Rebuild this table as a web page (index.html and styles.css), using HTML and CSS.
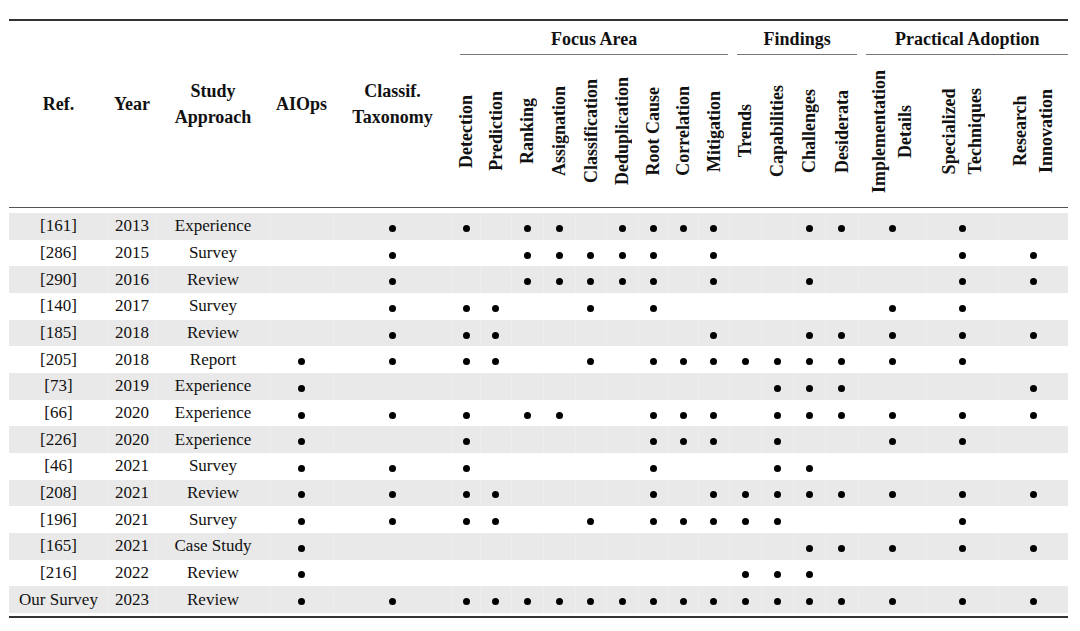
FILE: index.html
```html
<!DOCTYPE html>
<html lang="en">
<head>
<meta charset="utf-8">
<title>Comparison of surveys</title>
<link rel="stylesheet" href="styles.css">
</head>
<body>
<table class="tbl">
<colgroup>
<col class="w-ref"><col class="w-year"><col class="w-study"><col class="w-aiops"><col class="w-classif">
<col class="w-28"><col class="w-31"><col class="w-32"><col class="w-32"><col class="w-31"><col class="w-32"><col class="w-30"><col class="w-30"><col class="w-31">
<col class="w-32"><col class="w-32"><col class="w-32"><col class="w-33">
<col class="w-impl"><col class="w-spec"><col class="w-res">
</colgroup>
<thead>
<tr class="grp">
<th rowspan="2" class="plain">Ref.</th>
<th rowspan="2" class="plain">Year</th>
<th rowspan="2" class="plain">Study<br>Approach</th>
<th rowspan="2" class="plain">AIOps</th>
<th rowspan="2" class="plain">Classif.<br>Taxonomy</th>
<th colspan="9" class="grp-cell"><div class="grp-label">Focus Area</div></th>
<th colspan="4" class="grp-cell"><div class="grp-label">Findings</div></th>
<th colspan="3" class="grp-cell"><div class="grp-label grp-last">Practical Adoption</div></th>
</tr>
<tr class="rot-row">
<th><div class="rotwrap"><span class="rot">Detection</span></div></th>
<th><div class="rotwrap"><span class="rot">Prediction</span></div></th>
<th><div class="rotwrap"><span class="rot">Ranking</span></div></th>
<th><div class="rotwrap"><span class="rot">Assignation</span></div></th>
<th><div class="rotwrap"><span class="rot">Classification</span></div></th>
<th><div class="rotwrap"><span class="rot">Deduplication</span></div></th>
<th><div class="rotwrap"><span class="rot">Root Cause</span></div></th>
<th><div class="rotwrap"><span class="rot">Correlation</span></div></th>
<th><div class="rotwrap"><span class="rot">Mitigation</span></div></th>
<th><div class="rotwrap"><span class="rot">Trends</span></div></th>
<th><div class="rotwrap"><span class="rot">Capabilities</span></div></th>
<th><div class="rotwrap"><span class="rot">Challenges</span></div></th>
<th><div class="rotwrap"><span class="rot">Desiderata</span></div></th>
<th><div class="rotwrap"><span class="rot two">Implementation<br>Details</span></div></th>
<th><div class="rotwrap"><span class="rot two">Specialized<br>Techniques</span></div></th>
<th><div class="rotwrap"><span class="rot two">Research<br>Innovation</span></div></th>
</tr>
</thead>
<tbody>
<tr class="alt"><td>[161]</td><td>2013</td><td>Experience</td><td></td><td><i class="dot"></i></td>
<td><i class="dot"></i></td><td></td><td><i class="dot"></i></td><td><i class="dot"></i></td><td></td><td><i class="dot"></i></td><td><i class="dot"></i></td><td><i class="dot"></i></td><td><i class="dot"></i></td>
<td></td><td></td><td><i class="dot"></i></td><td><i class="dot"></i></td>
<td><i class="dot"></i></td><td><i class="dot"></i></td><td></td></tr>
<tr><td>[286]</td><td>2015</td><td>Survey</td><td></td><td><i class="dot"></i></td>
<td></td><td></td><td><i class="dot"></i></td><td><i class="dot"></i></td><td><i class="dot"></i></td><td><i class="dot"></i></td><td><i class="dot"></i></td><td></td><td><i class="dot"></i></td>
<td></td><td></td><td></td><td></td>
<td></td><td><i class="dot"></i></td><td><i class="dot"></i></td></tr>
<tr class="alt"><td>[290]</td><td>2016</td><td>Review</td><td></td><td><i class="dot"></i></td>
<td></td><td></td><td><i class="dot"></i></td><td><i class="dot"></i></td><td><i class="dot"></i></td><td><i class="dot"></i></td><td><i class="dot"></i></td><td></td><td><i class="dot"></i></td>
<td></td><td></td><td><i class="dot"></i></td><td></td>
<td></td><td><i class="dot"></i></td><td><i class="dot"></i></td></tr>
<tr><td>[140]</td><td>2017</td><td>Survey</td><td></td><td><i class="dot"></i></td>
<td><i class="dot"></i></td><td><i class="dot"></i></td><td></td><td></td><td><i class="dot"></i></td><td></td><td><i class="dot"></i></td><td></td><td></td>
<td></td><td></td><td></td><td></td>
<td><i class="dot"></i></td><td><i class="dot"></i></td><td></td></tr>
<tr class="alt"><td>[185]</td><td>2018</td><td>Review</td><td></td><td><i class="dot"></i></td>
<td><i class="dot"></i></td><td><i class="dot"></i></td><td></td><td></td><td></td><td></td><td></td><td></td><td><i class="dot"></i></td>
<td></td><td></td><td><i class="dot"></i></td><td><i class="dot"></i></td>
<td><i class="dot"></i></td><td><i class="dot"></i></td><td><i class="dot"></i></td></tr>
<tr><td>[205]</td><td>2018</td><td>Report</td><td><i class="dot"></i></td><td><i class="dot"></i></td>
<td><i class="dot"></i></td><td><i class="dot"></i></td><td></td><td></td><td><i class="dot"></i></td><td></td><td><i class="dot"></i></td><td><i class="dot"></i></td><td><i class="dot"></i></td>
<td><i class="dot"></i></td><td><i class="dot"></i></td><td><i class="dot"></i></td><td><i class="dot"></i></td>
<td><i class="dot"></i></td><td><i class="dot"></i></td><td></td></tr>
<tr class="alt"><td>[73]</td><td>2019</td><td>Experience</td><td><i class="dot"></i></td><td></td>
<td></td><td></td><td></td><td></td><td></td><td></td><td></td><td></td><td></td>
<td></td><td><i class="dot"></i></td><td><i class="dot"></i></td><td><i class="dot"></i></td>
<td></td><td></td><td><i class="dot"></i></td></tr>
<tr><td>[66]</td><td>2020</td><td>Experience</td><td><i class="dot"></i></td><td><i class="dot"></i></td>
<td><i class="dot"></i></td><td></td><td><i class="dot"></i></td><td><i class="dot"></i></td><td></td><td></td><td><i class="dot"></i></td><td><i class="dot"></i></td><td><i class="dot"></i></td>
<td></td><td><i class="dot"></i></td><td><i class="dot"></i></td><td><i class="dot"></i></td>
<td><i class="dot"></i></td><td><i class="dot"></i></td><td><i class="dot"></i></td></tr>
<tr class="alt"><td>[226]</td><td>2020</td><td>Experience</td><td><i class="dot"></i></td><td></td>
<td><i class="dot"></i></td><td></td><td></td><td></td><td></td><td></td><td><i class="dot"></i></td><td><i class="dot"></i></td><td><i class="dot"></i></td>
<td></td><td><i class="dot"></i></td><td></td><td></td>
<td><i class="dot"></i></td><td><i class="dot"></i></td><td></td></tr>
<tr><td>[46]</td><td>2021</td><td>Survey</td><td><i class="dot"></i></td><td><i class="dot"></i></td>
<td><i class="dot"></i></td><td></td><td></td><td></td><td></td><td></td><td><i class="dot"></i></td><td></td><td></td>
<td></td><td><i class="dot"></i></td><td><i class="dot"></i></td><td></td>
<td></td><td></td><td></td></tr>
<tr class="alt"><td>[208]</td><td>2021</td><td>Review</td><td><i class="dot"></i></td><td><i class="dot"></i></td>
<td><i class="dot"></i></td><td><i class="dot"></i></td><td></td><td></td><td></td><td></td><td><i class="dot"></i></td><td></td><td><i class="dot"></i></td>
<td><i class="dot"></i></td><td><i class="dot"></i></td><td><i class="dot"></i></td><td><i class="dot"></i></td>
<td><i class="dot"></i></td><td><i class="dot"></i></td><td><i class="dot"></i></td></tr>
<tr><td>[196]</td><td>2021</td><td>Survey</td><td><i class="dot"></i></td><td><i class="dot"></i></td>
<td><i class="dot"></i></td><td><i class="dot"></i></td><td></td><td></td><td><i class="dot"></i></td><td></td><td><i class="dot"></i></td><td><i class="dot"></i></td><td><i class="dot"></i></td>
<td><i class="dot"></i></td><td><i class="dot"></i></td><td></td><td></td>
<td></td><td><i class="dot"></i></td><td></td></tr>
<tr class="alt"><td>[165]</td><td>2021</td><td>Case Study</td><td><i class="dot"></i></td><td></td>
<td></td><td></td><td></td><td></td><td></td><td></td><td></td><td></td><td></td>
<td></td><td></td><td><i class="dot"></i></td><td><i class="dot"></i></td>
<td><i class="dot"></i></td><td><i class="dot"></i></td><td><i class="dot"></i></td></tr>
<tr><td>[216]</td><td>2022</td><td>Review</td><td><i class="dot"></i></td><td></td>
<td></td><td></td><td></td><td></td><td></td><td></td><td></td><td></td><td></td>
<td><i class="dot"></i></td><td><i class="dot"></i></td><td><i class="dot"></i></td><td></td>
<td></td><td></td><td></td></tr>
<tr class="alt"><td>Our Survey</td><td>2023</td><td>Review</td><td><i class="dot"></i></td><td><i class="dot"></i></td>
<td><i class="dot"></i></td><td><i class="dot"></i></td><td><i class="dot"></i></td><td><i class="dot"></i></td><td><i class="dot"></i></td><td><i class="dot"></i></td><td><i class="dot"></i></td><td><i class="dot"></i></td><td><i class="dot"></i></td>
<td><i class="dot"></i></td><td><i class="dot"></i></td><td><i class="dot"></i></td><td><i class="dot"></i></td>
<td><i class="dot"></i></td><td><i class="dot"></i></td><td><i class="dot"></i></td></tr>
</tbody>
</table>
</body>
</html>
```

FILE: styles.css
```css
html, body {
  margin: 0;
  padding: 0;
  background: #fff;
}

body {
  font-family: "Liberation Serif", "Times New Roman", serif;
  color: #111;
}

.tbl {
  margin: 19px 0 0 9px;
  width: 1059px;
  table-layout: fixed;
  border-collapse: separate;
  border-spacing: 0;
  border-top: 2px solid #333;
  border-bottom: 2px solid #333;
}

.w-ref { width: 99px; }
.w-year { width: 48px; }
.w-study { width: 114px; }
.w-aiops { width: 63px; }
.w-classif { width: 119px; }
.w-28 { width: 28px; }
.w-30 { width: 30px; }
.w-31 { width: 31px; }
.w-32 { width: 32px; }
.w-33 { width: 33px; }
.w-impl { width: 68px; }
.w-spec { width: 72px; }
.w-res { width: 70px; }

th, td {
  padding: 0;
  text-align: center;
}

th {
  font-weight: bold;
  font-size: 18px;
}

.plain {
  line-height: 26px;
  vertical-align: middle;
  padding-bottom: 21px;
  border-bottom: 1px solid #555;
}

.grp {
  height: 34px;
}

.grp-cell {
  vertical-align: bottom;
}

.grp-label {
  height: 29px;
  padding-top: 4px;
  line-height: 29px;
  margin: 0 1px 0 8px;
  border-bottom: 1px solid #777;
  white-space: nowrap;
}

.grp-label.grp-last {
  margin-right: 0;
}

.rot-row {
  height: 153px;
}

.rot-row th {
  border-bottom: 1px solid #555;
  vertical-align: middle;
}

.rotwrap {
  height: 152px;
  display: flex;
  align-items: center;
  justify-content: center;
}

.rot {
  writing-mode: vertical-rl;
  transform: rotate(180deg);
  line-height: 20px;
  white-space: nowrap;
  text-align: center;
}

.rot.two {
  line-height: 26px;
}

tbody tr {
  height: 26.667px;
}

tbody td {
  font-size: 17px;
  line-height: 20px;
  vertical-align: middle;
  white-space: nowrap;
}

tbody tr:first-child {
  height: 31.667px;
}

tbody tr:first-child td {
  border-top: 5px solid #fff;
}

tbody tr:last-child {
  height: 29.667px;
}

tbody tr:last-child td {
  border-bottom: 3px solid #fff;
}

tbody tr.alt td {
  background: #e9e9e9;
}

tbody tr.alt td + td {
  box-shadow: inset 1px 0 0 #ededed;
}

.dot {
  display: inline-block;
  width: 7px;
  height: 7px;
  border-radius: 50%;
  background: #000;
  vertical-align: middle;
  position: relative;
  top: 1px;
}
```
